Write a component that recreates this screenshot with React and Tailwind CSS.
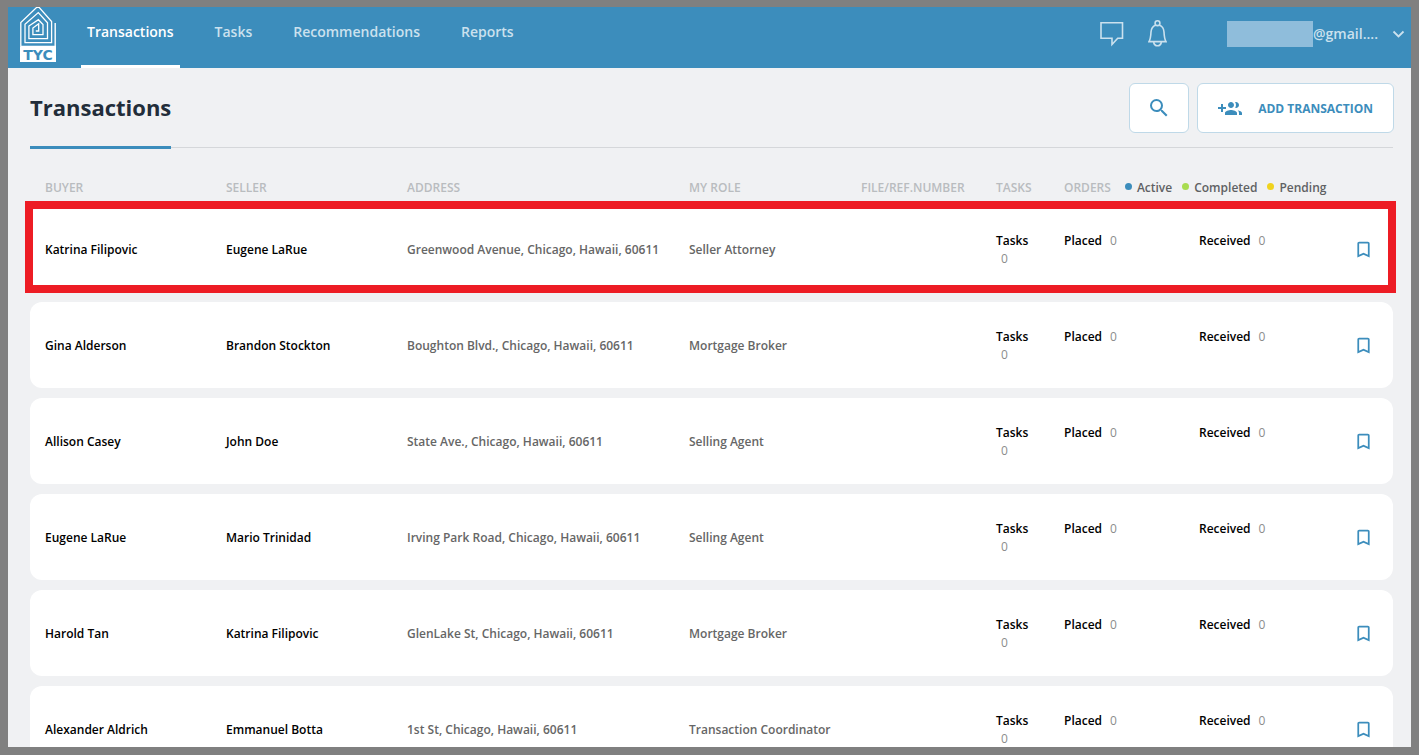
import React from "react";
import { MdBookmarkBorder, MdSearch } from "react-icons/md";

const navItems = ["Transactions", "Tasks", "Recommendations", "Reports"];

const transactions = [
  { buyer: "Katrina Filipovic", seller: "Eugene LaRue", address: "Greenwood Avenue, Chicago, Hawaii, 60611", role: "Seller Attorney", highlighted: true },
  { buyer: "Gina Alderson", seller: "Brandon Stockton", address: "Boughton Blvd., Chicago, Hawaii, 60611", role: "Mortgage Broker" },
  { buyer: "Allison Casey", seller: "John Doe", address: "State Ave., Chicago, Hawaii, 60611", role: "Selling Agent" },
  { buyer: "Eugene LaRue", seller: "Mario Trinidad", address: "Irving Park Road, Chicago, Hawaii, 60611", role: "Selling Agent" },
  { buyer: "Harold Tan", seller: "Katrina Filipovic", address: "GlenLake St, Chicago, Hawaii, 60611", role: "Mortgage Broker" },
  { buyer: "Alexander Aldrich", seller: "Emmanuel Botta", address: "1st St, Chicago, Hawaii, 60611", role: "Transaction Coordinator" },
];

const legend = [
  { label: "Active", dot: "bg-[#3c8dbc]" },
  { label: "Completed", dot: "bg-[#a8dc50]" },
  { label: "Pending", dot: "bg-[#f0d31e]" },
];

function Logo() {
  return (
    <svg width="36" height="55" viewBox="0 0 36 55" role="img" aria-label="TYC">
      <g fill="none" stroke="#fff" strokeWidth="1.3">
        <path d="M15.800 24h2.900v-7.200l-5.800 4.200v6.600H23V17.500l-4.600-4.800L8.900 19V31.700H27.500V15.800L18.300 5.600 5 17.200V35.700H31.600V14.500L18-.9.8 15.500V39.300H36" />
        <path d="M35.200 16V55" strokeWidth="1.4" />
      </g>
      <path fill="#fff" d="M0 40h36v15H0z" />
      <text x="18" y="52.500" textAnchor="middle" fill="#3c8dbc" fontFamily="DejaVu Sans, sans-serif" fontSize="14" fontWeight="700">TYC</text>
    </svg>
  );
}

function CommentIcon() {
  return (
    <svg width="24" height="26" viewBox="0 0 24 26" fill="none" stroke="currentColor" strokeWidth="1.6" aria-hidden="true">
      <path d="M1 1.700h21.500v15.600h-4.800L12 23.500v-6.200H1z" />
    </svg>
  );
}

function BellIcon() {
  return (
    <svg width="19" height="27" viewBox="0 0 19 27" fill="none" stroke="currentColor" strokeWidth="1.6" aria-hidden="true">
      <circle cx="9.500" cy="3.200" r="2.400" />
      <path d="M7.600 5.200C4.500 6.200 3.200 8.800 3 12c-.2 4.600-.6 7.200-2 9.600h17c-1.400-2.400-1.800-5-2-9.600-.2-3.200-1.500-5.800-4.600-6.800" />
      <path d="M5.600 22c.4 2.400 1.900 3.800 3.900 3.800s3.500-1.400 3.900-3.800" />
    </svg>
  );
}

function GroupAddIcon() {
  return (
    <svg width="24" height="24" viewBox="0 0 24 24" fill="currentColor" aria-hidden="true">
      <path d="M8 10H5V7H3v3H0v2h3v3h2v-3h3v-2zm10 1c1.660 0 2.990-1.340 2.990-3S19.660 5 18 5c-.32 0-.63.05-.91.14.57.81.9 1.790.9 2.860s-.34 2.040-.9 2.860c.28.09.59.14.91.14zm-5 0c1.660 0 2.990-1.340 2.990-3S14.660 5 13 5c-1.660 0-3 1.340-3 3s1.340 3 3 3zm6.620 2.160c.83.73 1.380 1.660 1.380 2.840v2h3v-2c0-1.540-2.370-2.490-4.380-2.840zM13 13c-2 0-6 1-6 3v2h12v-2c0-2-4-3-6-3z" />
    </svg>
  );
}

function Header() {
  return (
    <header className="flex h-[61px] shrink-0 items-start bg-[#3c8dbc] pl-3 pr-1.5">
      <a href="#home" className="shrink-0">
        <Logo />
      </a>
      <nav className="ml-[25px] flex gap-[29px] self-stretch text-sm font-semibold">
        {navItems.map((item, i) => (
          <a
            key={item}
            href={"#" + item.toLowerCase()}
            aria-current={i === 0 ? "page" : undefined}
            className={
              i === 0
                ? "border-b-[3px] border-white px-1.5 pt-3.5 leading-[22px] text-white"
                : "px-1.5 pt-3.5 leading-[22px] text-[#cbe1ee]"
            }
          >
            {item}
          </a>
        ))}
      </nav>
      <div className="ml-auto flex h-[53px] items-center text-[#cbe1ee]">
        <button type="button" aria-label="Messages">
          <CommentIcon />
        </button>
        <button type="button" aria-label="Notifications" className="ml-6">
          <BellIcon />
        </button>
        <button type="button" className="ml-[60px] flex items-center text-sm font-semibold">
          <span className="h-[26px] w-[86px] bg-[#8fbddb]" />
          <span>@gmail....</span>
          <svg className="ml-3.5" width="13" height="8" viewBox="0 0 13 8" fill="none" stroke="currentColor" strokeWidth="1.8" aria-hidden="true">
            <path d="M1.500 1.500l5 5 5-5" />
          </svg>
        </button>
      </div>
    </header>
  );
}

function Row({ item }) {
  return (
    <tr className="relative h-[86px] bg-white">
      <td className="rounded-l-xl pl-[15px] pt-0.5 text-black">
        {item.buyer}
        {item.highlighted && (
          <span className="pointer-events-none absolute -bottom-px -left-[5px] -right-[3px] -top-[5px] border-8 border-[#ed1c24]" />
        )}
      </td>
      <td className="pl-[15px] pt-0.5 text-black">{item.seller}</td>
      <td className="pl-[15px] pt-0.5 text-[#666]">{item.address}</td>
      <td className="pl-[15px] pt-0.5 text-[#666]">{item.role}</td>
      <td />
      <td className="pl-[15px] pt-0.5 text-black">
        Tasks
        <span className="block pl-[5px] font-normal text-[#8c8c8c]">0</span>
      </td>
      <td className="pl-[15px] pt-[26px] align-top text-black">
        Placed<span className="ml-2 font-normal text-[#8c8c8c]">0</span>
      </td>
      <td className="pl-[15px] pt-[26px] align-top text-black">
        Received<span className="ml-2 font-normal text-[#8c8c8c]">0</span>
      </td>
      <td className="rounded-r-xl">
        <button type="button" aria-label={"Bookmark " + item.buyer} className="mx-auto block text-[#3c8dbc]">
          <MdBookmarkBorder size={21} />
        </button>
      </td>
    </tr>
  );
}

export default function App() {
  return (
    <div className="flex h-screen flex-col overflow-hidden border-8 border-t-[7px] border-[#808080] bg-[#f0f1f3] font-['Open_Sans',sans-serif]">
      <Header />
      <main className="pl-[22px] pr-[18px]">
        <div className="flex h-20 items-center border-b border-[#d5d7da]">
          <h1 className="-mb-0.5 self-stretch border-b-[3px] border-[#3c8dbc] text-[22px] font-bold leading-[78px] text-[#222d3a]">
            Transactions
          </h1>
          <div className="-mr-px ml-auto flex gap-2 text-[#3c8dbc]">
            <button type="button" aria-label="Search" className="flex h-[50px] w-[60px] items-center justify-center rounded-md border border-[#bfd9e8] bg-white">
              <MdSearch size={24} />
            </button>
            <button type="button" className="flex h-[50px] items-center gap-4 rounded-md border border-[#bfd9e8] bg-white px-5 pt-0.5 text-xs font-bold">
              <GroupAddIcon />
              ADD TRANSACTION
            </button>
          </div>
        </div>
        <table className="mt-[18px] w-full table-fixed border-separate border-spacing-x-0 border-spacing-y-2.5 text-left text-xs font-semibold leading-[18px]">
          <colgroup>
            <col className="w-[181px]" />
            <col className="w-[181px]" />
            <col className="w-[282px]" />
            <col className="w-[172px]" />
            <col className="w-[135px]" />
            <col className="w-[68px]" />
            <col className="w-[135px]" />
            <col className="w-[149px]" />
            <col className="w-[60px]" />
          </colgroup>
          <thead className="leading-4">
            <tr className="text-[#b9bcbf]">
              <th className="pl-[15px] pt-1 font-semibold">BUYER</th>
              <th className="pl-[15px] pt-1 font-semibold">SELLER</th>
              <th className="pl-[15px] pt-1 font-semibold">ADDRESS</th>
              <th className="pl-[15px] pt-1 font-semibold">MY ROLE</th>
              <th className="pl-[15px] pt-1 font-semibold">FILE/REF.NUMBER</th>
              <th className="pl-[15px] pt-1 font-semibold">TASKS</th>
              <th colSpan={3} className="pl-[15px] pt-1 font-semibold">
                <div className="flex items-center">
                  ORDERS
                  <ul className="ml-3.5 flex gap-2.5 text-[#5f6163]">
                    {legend.map((l) => (
                      <li key={l.label} className="flex gap-[5px]">
                        <span className={"mt-[3px] size-[7px] rounded-full " + l.dot} />
                        {l.label}
                      </li>
                    ))}
                  </ul>
                </div>
              </th>
            </tr>
          </thead>
          <tbody>
            {transactions.map((item) => (
              <Row key={item.buyer} item={item} />
            ))}
          </tbody>
        </table>
      </main>
    </div>
  );
}
